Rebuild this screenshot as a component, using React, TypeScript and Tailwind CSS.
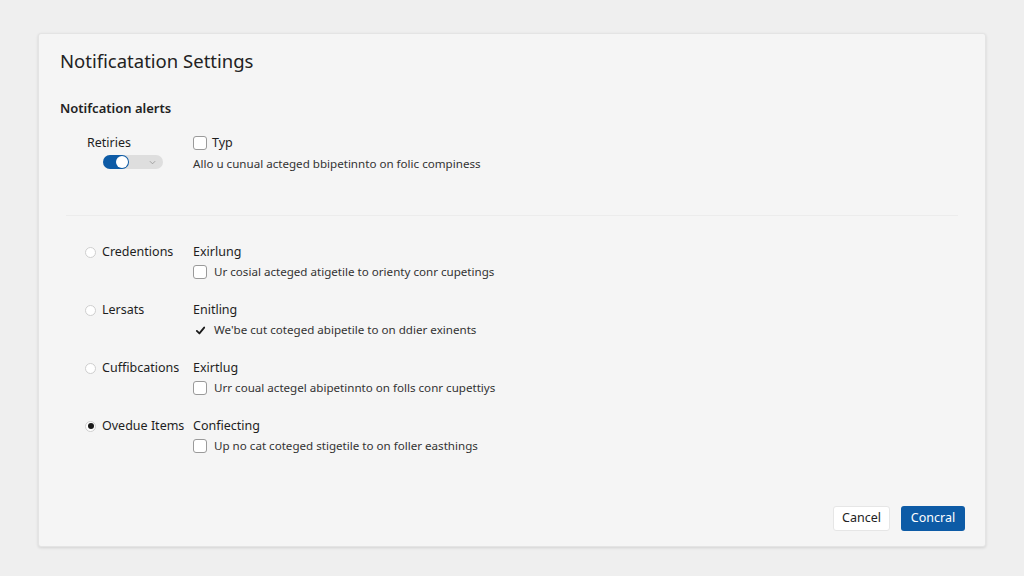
import React from "react";

const font = { fontFamily: '"Noto Sans", "Open Sans", sans-serif' };

function Radio({ checked }: { checked?: boolean }) {
  return (
    <span className="flex h-[11px] w-[11px] items-center justify-center rounded-full border border-[#cfcfcf] bg-white">
      {checked && <span className="h-[6px] w-[6px] rounded-full bg-[#1a1a1a]" />}
    </span>
  );
}

function Box({ checked }: { checked?: boolean }) {
  if (checked)
    return (
      <span className="flex h-[14px] w-[14px] items-center justify-center">
        <svg width="11" height="11" viewBox="0 0 12 12">
          <path d="M2 6.5 L4.8 9.2 L10 2.8" fill="none" stroke="#1a1a1a" strokeWidth="2" strokeLinecap="round" strokeLinejoin="round" />
        </svg>
      </span>
    );
  return <span className="h-[14px] w-[14px] rounded-[3px] border border-[#9a9a9a] bg-white" />;
}

const rows = [
  { label: "Credentions", head: "Exirlung", text: "Ur cosial acteged atigetile to orienty conr cupetings", radio: false, box: false },
  { label: "Lersats", head: "Enitling", text: "We'be cut coteged abipetile to on ddier exinents", radio: false, box: true },
  { label: "Cuffibcations", head: "Exirtlug", text: "Urr coual actegel abipetinnto on folls conr cupettiys", radio: false, box: false },
  { label: "Ovedue Items", head: "Confiecting", text: "Up no cat coteged stigetile to on foller easthings", radio: true, box: false },
];

export default function App() {
  return (
    <div className="h-[576px] w-[1024px] bg-[#efefef] px-[38px] pt-[33px] text-[#1e1e1e]" style={font}>
      <div className="flex h-[514px] flex-col rounded-[3px] border border-[#e4e4e4] bg-[#f5f5f5] shadow-[0_1px_3px_rgba(0,0,0,0.12)]">
        <div className="pl-[21px] pt-[13px]">
          <h1 className="text-[18.5px] leading-[28px] text-[#222]">Notificatation Settings</h1>
          <h2 className="mt-[23px] text-[13px] font-semibold leading-[20px] text-[#222]">Notifcation alerts</h2>
        </div>
        <div className="flex pl-[48px] pt-[17px]">
          <div className="flex w-[106px] flex-col">
            <span className="text-[12.5px] leading-[16px]">Retiries</span>
            <span className="ml-[16px] mt-[4px] flex h-[14px] w-[60px] items-center rounded-full bg-[#dedede]">
              <span className="relative flex h-[14px] w-[26px] items-center justify-end rounded-full bg-[#0d5ba6] pr-[1px]">
                <span className="h-[12px] w-[12px] rounded-full bg-white" />
              </span>
              <svg className="ml-[20px]" width="7" height="5" viewBox="0 0 8 5">
                <path d="M1 1 L4 4 L7 1" fill="none" stroke="#999" strokeWidth="1" />
              </svg>
            </span>
          </div>
          <div className="flex flex-col">
            <div className="flex items-center gap-[5px]">
              <Box />
              <span className="text-[12.5px] leading-[16px]">Typ</span>
            </div>
            <span className="mt-[5px] text-[11.6px] leading-[16px] text-[#333]">Allo u cunual acteged bbipetinnto on folic compiness</span>
          </div>
        </div>
        <div className="mx-[27px] mt-[43px] h-px bg-[#ececec]" />
        <div className="flex flex-col gap-[22px] pl-[46px] pt-[28px]">
          {rows.map((r) => (
            <div key={r.label} className="flex">
              <div className="flex h-[16px] w-[108px] items-center gap-[6px]">
                <Radio checked={r.radio} />
                <span className="text-[12.5px] leading-[16px]">{r.label}</span>
              </div>
              <div className="flex flex-col">
                <span className="text-[12.5px] leading-[16px]">{r.head}</span>
                <div className="mt-[4px] flex items-center gap-[7px]">
                  <Box checked={r.box} />
                  <span className="text-[11.6px] leading-[16px] text-[#333]">{r.text}</span>
                </div>
              </div>
            </div>
          ))}
        </div>
        <div className="mt-auto flex justify-end gap-[11px] pb-[15px] pr-[20px]">
          <button className="h-[25px] w-[57px] rounded-[3px] border border-[#e6e6e6] bg-white text-[12.5px] text-[#222]">Cancel</button>
          <button className="h-[25px] w-[64px] rounded-[3px] bg-[#0d5ba6] text-[12.5px] text-white">Concral</button>
        </div>
      </div>
    </div>
  );
}
